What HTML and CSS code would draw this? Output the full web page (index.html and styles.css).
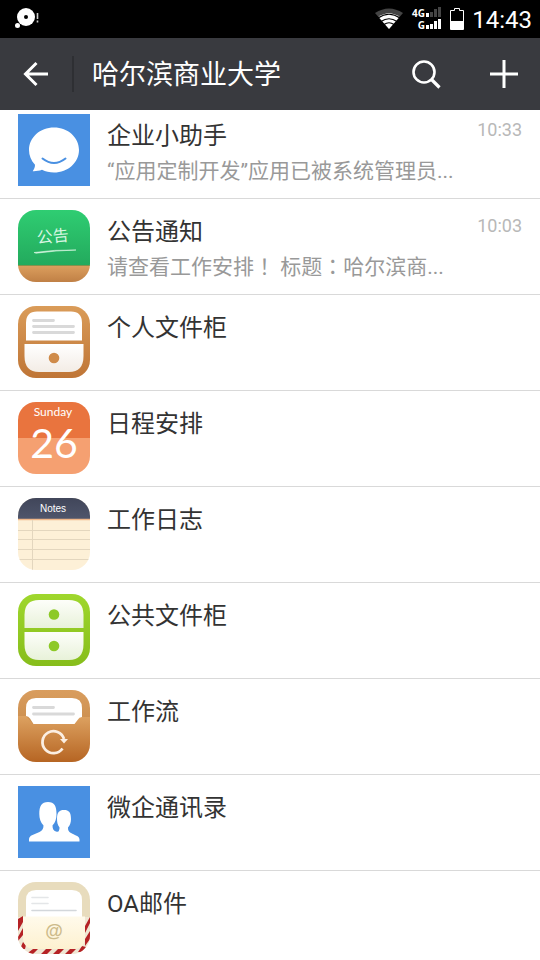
FILE: index.html
```html
<!DOCTYPE html>
<html lang="zh-CN">
<head>
<meta charset="utf-8">
<meta name="viewport" content="width=device-width, initial-scale=1">
<title>哈尔滨商业大学</title>
<link rel="stylesheet" href="styles.css">
</head>
<body>
<div class="status">
  <svg class="notice" width="26" height="24" viewBox="0 0 26 24" aria-hidden="true">
    <circle cx="12" cy="11" r="9" fill="#fff"/><circle cx="12" cy="11" r="2" fill="#000"/>
    <circle cx="3.500" cy="19.500" r="2.500" fill="#fff"/>
    <path d="M23.500 7v6M23.500 14.500v2" stroke="#ccc" stroke-width="1.600"/>
  </svg>
  <div class="status-right">
    <svg width="28" height="22" viewBox="0 0 28 22" aria-hidden="true">
      <path d="M14 21L0 5Q14-4 28 5z" fill="#444"/>
      <path d="M14 21L3.500 9Q14 1.500 24.500 9z" fill="#fff"/>
      <path d="M3 10Q14 2.500 25 10M6 13.500Q14 8 22 13.500M9 16.500Q14 13 19 16.500" fill="none" stroke="#000" stroke-width="1.200"/>
    </svg>
    <svg class="signal" width="34" height="26" viewBox="-4 -1 34 26" aria-hidden="true">
      <text class="net" x="13" y="10" text-anchor="end">4G</text>
      <text class="net" x="13" y="22" text-anchor="end">G</text>
      <path d="M14 6h3v4h-3zM14 18h3v4h-3zM18 17h3v5h-3zM22 14h3v8h-3zM26 12h3v10h-3z" fill="#fff"/>
      <path d="M18 5h3v5h-3zM22 2h3v8h-3zM26 0h3v10h-3z" fill="#444"/>
    </svg>
    <svg class="battery" width="14" height="22" viewBox="0 0 14 22" aria-hidden="true">
      <path d="M.500 2.500h4v-2h5v2h4v19H.500z" fill="none" stroke="#fff"/>
      <path d="M1 13h12v8H1z" fill="#fff"/>
    </svg>
    <time class="clock">14:43</time>
  </div>
</div>
<header class="bar">
  <button class="icon-btn back" aria-label="返回">
    <svg width="26" height="26" viewBox="0 0 26 26"><path d="M25 13H3M13.500 2L2.500 13l11 11" fill="none" stroke="#fff" stroke-width="3"/></svg>
  </button>
  <h1 class="bar-title">哈尔滨商业大学</h1>
  <button class="icon-btn" aria-label="搜索">
    <svg width="30" height="30" viewBox="0 0 30 30"><circle cx="13" cy="13" r="10.500" fill="none" stroke="#fff" stroke-width="2.600"/><path d="M20 20l8.500 8.500" stroke="#fff" stroke-width="3.200"/></svg>
  </button>
  <button class="icon-btn add" aria-label="添加">
    <svg width="28" height="28" viewBox="0 0 28 28"><path d="M0 14h28M14 0v28" stroke="#fff" stroke-width="3"/></svg>
  </button>
</header>
<main class="list">
  <a class="row" href="#">
    <svg class="app" viewBox="0 0 72 72" aria-hidden="true">
      <path d="M0 0h72v72H0z" fill="#4990e2"/>
      <path d="M36 13.500c14 0 25 10 25 22.500S50 58.500 36 58.500c-4.500 0-8.500-1-12-2.700-3 1.200-6 1.500-9.300 1.400 1.600-2 2.300-4.200 2.300-6.400C13 46.500 11 41.500 11 36c0-12.500 11-22.500 25-22.500z" fill="#fff"/>
      <path d="M24.500 44.500q11.500 9 23 0" fill="none" stroke="#4990e2" stroke-width="2" stroke-linecap="round"/>
    </svg>
    <div class="body">
      <div class="line"><h2 class="name">企业小助手</h2><time class="time">10:33</time></div>
      <p class="msg">“应用定制开发”应用已被系统管理员...</p>
    </div>
  </a>
  <a class="row" href="#">
    <svg class="app round" viewBox="0 0 72 72" aria-hidden="true">
      <defs>
        <linearGradient id="green" x2="0" y2="1"><stop stop-color="#2fcd72"/><stop offset="1" stop-color="#23aa5d"/></linearGradient>
        <linearGradient id="wood" x2="0" y2="1"><stop stop-color="#dda05f"/><stop offset="1" stop-color="#c08045"/></linearGradient>
      </defs>
      <path d="M0 0h72v55H0z" fill="url(#green)"/><path d="M0 55h72v17H0z" fill="url(#wood)"/><path d="M0 55.500h72" stroke="#85914b"/>
      <text class="chalk" transform="rotate(-5 36 30)" x="19" y="32">公告</text>
      <path d="M16 42.500q20-3 42-2.500-20 .5-40 3.200z" fill="#d8f6e3" stroke="#d8f6e3" stroke-width=".6"/>
    </svg>
    <div class="body">
      <div class="line"><h2 class="name">公告通知</h2><time class="time">10:03</time></div>
      <p class="msg">请查看工作安排<span class="punct" lang="zh-TW">！</span> 标题<span class="punct" lang="zh-TW">：</span>哈尔滨商...</p>
    </div>
  </a>
  <a class="row" href="#">
    <svg class="app round" viewBox="0 0 72 72" aria-hidden="true">
      <defs>
        <linearGradient id="cabinet" x2="0" y2="1"><stop stop-color="#da9c59"/><stop offset="1" stop-color="#bf7536"/></linearGradient>
        <linearGradient id="drawer" x2="0" y2="1"><stop stop-color="#fff"/><stop offset="1" stop-color="#f3ece5"/></linearGradient>
      </defs>
      <path d="M0 0h72v72H0z" fill="url(#cabinet)"/>
      <path d="M8 34.500V17Q8 5.500 19 5.500h34q11 0 11 11.500v17.500z" fill="#fff"/>
      <path d="M6.500 38h59v12Q65.500 66 51 66H21Q6.500 66 6.500 50z" fill="url(#drawer)"/>
      <path d="M15.500 14.500h20M15.500 20.500h40M15.500 26.500h40" stroke="#d9d9d9" stroke-width="2.800" stroke-linecap="round"/>
      <circle cx="36" cy="52" r="5.300" fill="#cf8b4a"/>
    </svg>
    <div class="body"><h2 class="name">个人文件柜</h2></div>
  </a>
  <a class="row" href="#">
    <svg class="app round" viewBox="0 0 72 72" aria-hidden="true">
      <path d="M0 0h72v36H0z" fill="#e9743e"/><path d="M0 36h72v36H0z" fill="#f5a071"/>
      <text class="weekday" x="35" y="14" text-anchor="middle">Sunday</text>
      <text class="date" x="36" y="56" text-anchor="middle">26</text>
    </svg>
    <div class="body"><h2 class="name">日程安排</h2></div>
  </a>
  <a class="row" href="#">
    <svg class="app round" viewBox="0 0 72 72" aria-hidden="true">
      <defs><linearGradient id="navy" x2="0" y2="1"><stop stop-color="#41465a"/><stop offset="1" stop-color="#4e556b"/></linearGradient></defs>
      <path d="M0 0h72v72H0z" fill="#fdf0d7"/><path d="M0 0h72v21H0z" fill="url(#navy)"/>
      <path d="M0 21.500h72" stroke="#f0b88a" stroke-width="1.400"/>
      <path d="M0 32.500h72M0 41.500h72M0 51.500h72M0 61.500h72M14.500 22v50" stroke="#e3d6be"/>
      <text class="notes" x="35" y="14" text-anchor="middle">Notes</text>
    </svg>
    <div class="body"><h2 class="name">工作日志</h2></div>
  </a>
  <a class="row" href="#">
    <svg class="app round" viewBox="0 0 72 72" aria-hidden="true">
      <defs>
        <linearGradient id="lime" x2="0" y2="1"><stop stop-color="#9fd72d"/><stop offset="1" stop-color="#86bd1b"/></linearGradient>
        <linearGradient id="tray" x2="0" y2="1"><stop stop-color="#fdfefa"/><stop offset="1" stop-color="#e8f2d9"/></linearGradient>
      </defs>
      <path d="M0 0h72v72H0z" fill="url(#lime)"/>
      <path d="M6.500 34V21Q6.500 6 21 6h30q14.500 0 14.500 15v13z" fill="url(#tray)"/>
      <path d="M6.500 38h59v12Q65.500 66 51 66H21Q6.500 66 6.500 50z" fill="url(#tray)"/>
      <circle cx="36" cy="20.500" r="5.300" fill="#8dc927"/><circle cx="36" cy="52" r="5.300" fill="#8dc927"/>
    </svg>
    <div class="body"><h2 class="name">公共文件柜</h2></div>
  </a>
  <a class="row" href="#">
    <svg class="app round" viewBox="0 0 72 72" aria-hidden="true">
      <defs>
        <linearGradient id="folder" x2="0" y2="1"><stop stop-color="#dda261"/><stop offset="1" stop-color="#b66523"/></linearGradient>
        <linearGradient id="folderback" x2="0" y2="1"><stop stop-color="#d99d5e"/><stop offset="1" stop-color="#c98c4c"/></linearGradient>
      </defs>
      <path d="M0 0h72v40H0z" fill="url(#folderback)"/>
      <path d="M0 26h8l7 8h41l6-7h10v45H0z" fill="url(#folder)"/>
      <path d="M8 26V18Q8 8 18 8h36q10 0 10 10v9q-3 0-4 2.500L56.500 34H15.500L12 28.500Q10.500 26 8 26z" fill="#fff"/>
      <path d="M15.500 17.500h20M15.500 24h40" stroke="#d9d9d9" stroke-width="2.800" stroke-linecap="round"/>
      <path d="M44.500 58.500A11 11 0 1 1 46 49" fill="none" stroke="#fbeee2" stroke-width="2.800"/>
      <path d="M42 49h8l-4 4.500z" fill="#fbeee2"/>
    </svg>
    <div class="body"><h2 class="name">工作流</h2></div>
  </a>
  <a class="row" href="#">
    <svg class="app" viewBox="0 0 72 72" aria-hidden="true">
      <path d="M0 0h72v72H0z" fill="#4990e2"/>
      <path d="M11 55.500v-2c0-2 1-3.500 3.500-4.500l7-3c3-1.500 4-3.500 4-6.500-3-3-4.200-7-4.200-11.500 0-8 2.200-12 8.700-12s8.500 4 8.500 12c0 4.500-1 8.500-4 11.500 0 3.500 1 5.200 3.500 6q2.500 1 3-1c.5-1.500.5-2 .5-3-2-2.500-2.500-5.500-2.500-8.500 0-6.500 2-9 7-9s7 2.500 7 9c0 3.500-1 6.500-3 8.500 0 3 .5 4 3 5.500l5 2.500c2.500 1 3.500 2.500 3.500 4v2z" fill="#fff"/>
    </svg>
    <div class="body"><h2 class="name">微企通讯录</h2></div>
  </a>
  <a class="row" href="#">
    <svg class="app round" viewBox="0 0 72 72" aria-hidden="true">
      <defs>
        <linearGradient id="envelope" x2="0" y2="1"><stop stop-color="#fffaeb"/><stop offset="1" stop-color="#fdf1d0"/></linearGradient>
      </defs>
      <path d="M0 0h72v36H0z" fill="#e8dcbd"/>
      <path d="M0 35h72v37H0z" fill="#efe6d3"/>
      <path d="M0 37l5-3v6l-5 9zM0 55l5-9v7l-5 6zM2 67l3-7 3 3-1 4zM11 70l4-3h5l-5 5h-6zM23 72l5-5h6l-5 5zM35 72l5-5h6l-5 5zM47 72l5-5h6l-5 5zM60 70l4-6 4 1-4 5zM67 57l5-8v8l-5 7zM67 44l5-9v6l-5 10z" fill="#b52225"/>
      <path d="M8 36V18Q8 8 18 8h36q10 0 10 10v18z" fill="#fff"/>
      <path d="M14 15.500h16M14 21.500h16" stroke="#e4e6e8" stroke-width="1.600" stroke-linecap="round"/><path d="M14 28.500h44" stroke="#d3d7db" stroke-width="1.600" stroke-linecap="round"/>
      <path d="M5 34.500h62V55Q67 67 55 67H17Q5 67 5 55z" fill="url(#envelope)"/>
      <text class="at" x="36" y="55" text-anchor="middle">@</text>
    </svg>
    <div class="body"><h2 class="name">OA邮件</h2></div>
  </a>
</main>
</body>
</html>
```
FILE: styles.css
```css
* { box-sizing: border-box; }

body {
  margin: 0;
  height: 100vh;
  display: flex;
  flex-direction: column;
  overflow: hidden;
  background: #fff;
  color: #333;
  font-family: Roboto, "Noto Sans CJK SC", sans-serif;
}

svg { display: block; flex: none; }
h1, h2, p { margin: 0; font-weight: 400; }

.status {
  flex: none;
  height: 38px;
  padding: 0 8px 0 14px;
  display: flex;
  align-items: center;
  justify-content: space-between;
  background: #000;
  color: #fff;
}
.status-right { display: flex; align-items: center; }
.net { font: 700 10px "Open Sans", sans-serif; fill: #fff; }
.signal { margin-left: 5px; }
.battery { margin: 0 8px; }
.notice { margin-bottom: 2px; }
.clock { padding-top: 2px; font-size: 24px; line-height: 36px; }

.bar {
  flex: none;
  height: 72px;
  padding-right: 8px;
  display: flex;
  align-items: center;
  background: #393a3f;
  color: #fff;
}
.icon-btn {
  display: grid;
  place-items: center;
  width: 56px;
  height: 56px;
  padding: 0;
  border: 0;
  background: none;
  color: inherit;
}
.add { margin-left: 22px; }
.back {
  width: 74px;
  height: 36px;
  border-right: 2px solid #2e2f33;
}
.bar-title {
  flex: 1;
  padding: 2px 0 0 18px;
  font-size: 27px;
  line-height: 40px;
}

.list { flex: 1; min-height: 0; overflow: hidden; }
.row {
  display: flex;
  gap: 17px;
  height: 96px;
  padding: 11px 18px 0;
  border-bottom: 1px solid #d9d9d9;
  color: inherit;
  text-decoration: none;
}
.row:first-child { height: 89px; padding-top: 4px; }
.app { width: 72px; height: 72px; }
.round { border-radius: 18px; }
.body { flex: 1; min-width: 0; }
.line { display: flex; justify-content: space-between; }
.name { font-size: 24px; line-height: 44px; }
.time { font-size: 18px; line-height: 32px; color: #b8b8b8; }
.msg {
  font-size: 21px;
  line-height: 26px;
  color: #999;
  white-space: nowrap;
}
.punct { font-family: "Noto Sans CJK TC", sans-serif; line-height: 1; }

.chalk { font: 400 16px "Noto Sans CJK SC", sans-serif; fill: #d8f6e3; }
.weekday { font: 400 12px Lato, sans-serif; fill: #fff; }
.date { font: 400 41px Lato, sans-serif; fill: #fff; }
.notes { font: 400 10px "Liberation Sans", sans-serif; fill: #fff; }
.at { font: 700 18px "Liberation Sans", sans-serif; fill: #cdbb8b; }
```
